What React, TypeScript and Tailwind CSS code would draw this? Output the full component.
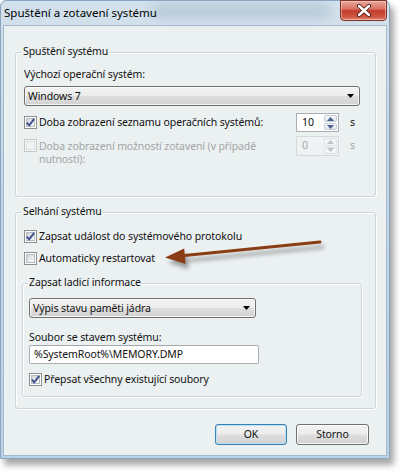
import React from "react";

function CheckBox({ checked = false, disabled = false }: { checked?: boolean; disabled?: boolean }) {
  return (
    <div
      className={`w-[13px] h-[13px] shrink-0 border p-[1px] ${
        disabled ? "border-[#c5c7c9] bg-[#f5f6f6]" : "border-[#8e8f8f] bg-white"
      }`}
    >
      <div
        className={`relative w-full h-full border ${
          disabled
            ? "border-[#dcdfe1] bg-[#f2f3f3]"
            : "border-[#b6bbc1] bg-[linear-gradient(135deg,#cdd1d6_0%,#e9ebee_55%,#f8f8f8_100%)]"
        }`}
      >
        {checked && (
          <svg className="absolute left-[-2px] top-[-2px]" width="11" height="11" viewBox="0 0 11 11">
            <path d="M1.8 5.6 L4.2 8.3 L9.2 1.8" fill="none" stroke="#3b4f8c" strokeWidth="1.9" strokeLinejoin="miter" />
          </svg>
        )}
      </div>
    </div>
  );
}

function Combo({ text, width }: { text: string; width: string }) {
  return (
    <div
      className={`${width} h-[20px] flex items-center rounded-[3px] border border-[#707070] bg-[linear-gradient(to_bottom,#f3f3f3_0%,#ececec_48%,#dedede_52%,#d2d2d2_100%)] shadow-[inset_0_0_0_1px_rgba(255,255,255,0.75)] pl-[3px] pr-[5px]`}
    >
      <span className="flex-1 leading-[18px] whitespace-nowrap">{text}</span>
      <svg width="7" height="4" viewBox="0 0 7 4">
        <polygon points="0,0 7,0 3.5,4" fill="#000" />
      </svg>
    </div>
  );
}

function Spinner({ value, disabled = false }: { value: string; disabled?: boolean }) {
  const arrow = disabled ? "#c3c3c3" : "#4a5f8e";
  return (
    <div
      className={`w-[43px] ${disabled ? "h-[20px] border-[#d5d8db] bg-[#eef2f3] text-[#a7a9ab]" : "h-[19px] border-[#abadb3] bg-white"} border flex`}
    >
      <div className="flex-1 pl-[5px] flex items-center">{value}</div>
      <div className="w-[15px] flex flex-col p-[1px] gap-[1px]">
        <div
          className={`flex-1 flex items-center justify-center rounded-[2px] border ${
            disabled ? "border-[#dfe2e4] bg-[#f2f4f5]" : "border-[#c7cdd6] bg-[linear-gradient(to_bottom,#f6f7f9,#e3e7ec)]"
          }`}
        >
          <svg width="7" height="4" viewBox="0 0 7 4">
            <polygon points="0,4 7,4 3.5,0" fill={arrow} />
          </svg>
        </div>
        <div
          className={`flex-1 flex items-center justify-center rounded-[2px] border ${
            disabled ? "border-[#dfe2e4] bg-[#f2f4f5]" : "border-[#c7cdd6] bg-[linear-gradient(to_bottom,#f6f7f9,#e3e7ec)]"
          }`}
        >
          <svg width="7" height="4" viewBox="0 0 7 4">
            <polygon points="0,0 7,0 3.5,4" fill={arrow} />
          </svg>
        </div>
      </div>
    </div>
  );
}

function WinButton({ label, isDefault = false, width }: { label: string; isDefault?: boolean; width: string }) {
  return (
    <div
      className={`${width} h-[21px] flex items-center justify-center rounded-[3px] border ${
        isDefault
          ? "border-[#3c7fb1] shadow-[inset_0_0_0_1px_#b6e0f7]"
          : "border-[#707070] shadow-[inset_0_0_0_1px_rgba(255,255,255,0.8)]"
      } bg-[linear-gradient(to_bottom,#f3f3f3_0%,#ececec_48%,#dedede_52%,#d2d2d2_100%)]`}
    >
      {label}
    </div>
  );
}

export default function App() {
  return (
    <div className="w-[405px] h-[475px] bg-white relative overflow-hidden font-['Noto_Sans',sans-serif] text-[10.5px] tracking-[-0.1px] text-[#111]">
      {/* Window */}
      <div className="w-[390px] h-[459px] flex flex-col rounded-t-[6px] border border-[#8aa5bf] bg-[linear-gradient(to_bottom,#d3e1ec,#c4d6e6_40%,#bcd1e4)] shadow-[4px_6px_6px_rgba(0,0,0,0.35)]">
        {/* Title bar */}
        <div className="h-[24px] flex items-start relative">
          <div className="absolute left-[150px] top-[4px] w-[180px] h-[12px] rounded-full bg-[#9fb4c6] blur-[6px] opacity-60" />
          <div className="pl-[3px] pt-[4px] leading-[15px] text-[11.5px] tracking-normal text-black relative">Spuštění a zotavení systému</div>
          <div className="flex-1" />
          <div className="relative mr-[2px] mt-[-1px] w-[47px] h-[21px] rounded-b-[4px] border border-[#7d3028] bg-[linear-gradient(to_bottom,#e9a99d_0%,#d8705f_42%,#c23a2b_52%,#cf5a45_85%,#e08a70_100%)] shadow-[inset_0_0_0_1px_rgba(255,220,210,0.5)] flex items-center justify-center">
            <svg width="16" height="13" viewBox="0 0 16 13">
              <path d="M3 2 L13 11 M13 2 L3 11" stroke="#4a1d18" strokeWidth="4.2" strokeLinecap="round" />
              <path d="M3 2 L13 11 M13 2 L3 11" stroke="#ffffff" strokeWidth="2.4" strokeLinecap="round" />
            </svg>
          </div>
        </div>

        {/* Content pane */}
        <div className="flex-1 mx-[2px] mb-[2px] border border-[#a3b8cb] bg-[#ebf0f1] pl-[11px] pr-[10px] flex flex-col">
          {/* Group 1 */}
          <div className="relative mt-[26px] h-[145px] rounded-[3px] border border-[#cdd6dc] shadow-[inset_1px_1px_0_#fff,1px_1px_0_#fff] pl-[8px] flex flex-col">
            <div className="absolute left-[6px] top-[-9px] px-[1px] bg-[#ebf0f1] leading-[15px]">Spuštění systému</div>
            <div className="mt-[14px] h-[15px] leading-[15px]">Výchozí operační systém:</div>
            <div className="mt-[4px]">
              <Combo text="Windows 7" width="w-[336px]" />
            </div>
            <div className="mt-[7px] h-[19px] flex items-center">
              <div className="w-[272px] flex items-center gap-[2px]">
                <CheckBox checked />
                <span className="whitespace-nowrap leading-[15px]">Doba zobrazení seznamu operačních systémů:</span>
              </div>
              <Spinner value="10" />
              <span className="ml-[11px]">s</span>
            </div>
            <div className="mt-[4px] flex items-start">
              <div className="w-[272px] flex items-start gap-[2px]">
                <div className="mt-[3px]">
                  <CheckBox disabled />
                </div>
                <span className="mt-[4px] leading-[13px] text-[#a3a5a7] whitespace-nowrap">
                  Doba zobrazení možností zotavení (v případě
                  <br />
                  nutností):
                </span>
              </div>
              <Spinner value="0" disabled />
              <span className="ml-[11px] mt-[2px] text-[#a3a5a7]">s</span>
            </div>
          </div>

          {/* Group 2 */}
          <div className="relative mt-[15px] h-[197px] rounded-[3px] border border-[#cdd6dc] shadow-[inset_1px_1px_0_#fff,1px_1px_0_#fff] pl-[8px] flex flex-col">
            <div className="absolute left-[6px] top-[-9px] px-[1px] bg-[#ebf0f1] leading-[15px]">Selhání systému</div>
            <div className="mt-[16px] h-[15px] flex items-center gap-[2px]">
              <CheckBox checked />
              <span className="leading-[15px] whitespace-nowrap">Zapsat událost do systémového protokolu</span>
            </div>
            <div className="mt-[7px] h-[15px] flex items-center gap-[2px]">
              <CheckBox />
              <span className="leading-[15px] whitespace-nowrap">Automaticky restartovat</span>
            </div>

            {/* Inner group */}
            <div className="relative mt-[17px] ml-[-2px] w-[340px] h-[114px] rounded-[3px] border border-[#cdd6dc] shadow-[inset_1px_1px_0_#fff,1px_1px_0_#fff] pl-[6px] flex flex-col">
              <div className="absolute left-[5px] top-[-9px] px-[1px] bg-[#ebf0f1] leading-[15px]">Zapsat ladicí informace</div>
              <div className="mt-[14px]">
                <Combo text="Výpis stavu paměti jádra" width="w-[227px]" />
              </div>
              <div className="mt-[12px] h-[15px] leading-[15px]">Soubor se stavem systému:</div>
              <div className="w-[230px] h-[19px] border border-[#abadb3] border-t-[#a3a7ae] bg-white rounded-[2px] flex items-center pl-[4px]">
                %SystemRoot%\MEMORY.DMP
              </div>
              <div className="mt-[8px] h-[15px] flex items-center gap-[2px]">
                <CheckBox checked />
                <span className="leading-[15px] whitespace-nowrap">Přepsat všechny existující soubory</span>
              </div>
            </div>
          </div>

          {/* Buttons */}
          <div className="mt-[15px] flex justify-end gap-[9px] mr-[7px]">
            <WinButton label="OK" isDefault width="w-[72px]" />
            <WinButton label="Storno" width="w-[73px]" />
          </div>
        </div>
      </div>

      {/* Annotation arrow */}
      <svg
        className="absolute left-[160px] top-[236px] drop-shadow-[3px_5px_2px_rgba(0,0,0,0.35)]"
        width="170"
        height="36"
        viewBox="0 0 170 36"
      >
        <line x1="160" y1="6" x2="22" y2="19.8" stroke="#8a3c14" strokeWidth="3" strokeLinecap="round" />
        <polygon points="5,21.5 24.2,12.5 25.6,28" fill="#8a3c14" />
      </svg>
    </div>
  );
}
